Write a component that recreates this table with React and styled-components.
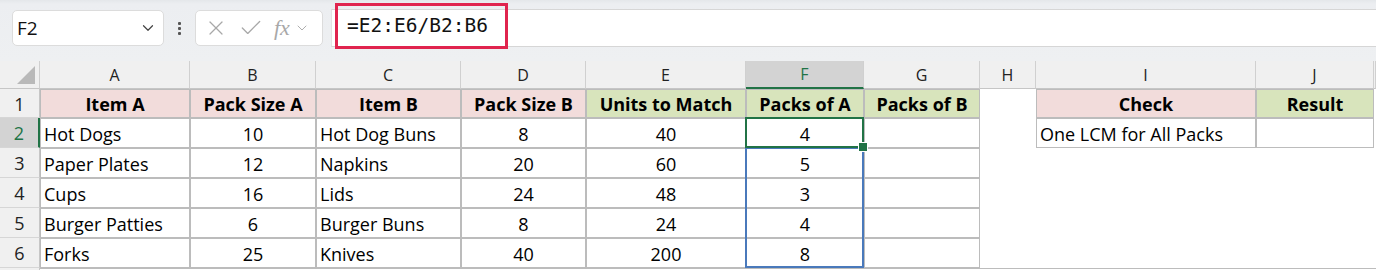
import React from 'react'
import styled, { createGlobalStyle } from 'styled-components'
import { X, Check, ChevronDown } from 'lucide-react'

const letters = ['A', 'B', 'C', 'D', 'E', 'F', 'G', 'H', 'I', 'J']

const PINK = '#f2dcdb'
const GREEN = '#d8e4bc'

const headRow = [
  { t: 'Item A', fill: PINK },
  { t: 'Pack Size A', fill: PINK },
  { t: 'Item B', fill: PINK },
  { t: 'Pack Size B', fill: PINK },
  { t: 'Units to Match', fill: GREEN },
  { t: 'Packs of A', fill: GREEN },
  { t: 'Packs of B', fill: GREEN },
  null,
  { t: 'Check', fill: PINK },
  { t: 'Result', fill: GREEN },
]

const data = [
  ['Hot Dogs', 10, 'Hot Dog Buns', 8, 40, 4],
  ['Paper Plates', 12, 'Napkins', 20, 60, 5],
  ['Cups', 16, 'Lids', 24, 48, 3],
  ['Burger Patties', 6, 'Burger Buns', 8, 24, 4],
  ['Forks', 25, 'Knives', 40, 200, 8],
]

const App = () => {
  return (
    <>
      <Global />
      <Toolbar>
        <NameBox>
          <span>F2</span>
          <ChevronDown size={18} strokeWidth={1.6} color='#444' />
        </NameBox>
        <Dots>
          <i /><i /><i />
        </Dots>
        <FxBox>
          <X size={24} strokeWidth={1.2} color='#a8a8a8' />
          <Check size={26} strokeWidth={1.2} color='#a8a8a8' />
          <Fx>fx</Fx>
          <ChevronDown size={16} strokeWidth={1.4} color='#a8a8a8' />
        </FxBox>
        <Formula>
          <Highlight>=E2:E6/B2:B6</Highlight>
        </Formula>
      </Toolbar>

      <Stack>
        <Sheet>
          <Corner><Triangle /></Corner>
          {letters.map(l => (
            <ColHead key={l} $active={l === 'F'}>{l}</ColHead>
          ))}
          <ColHead />

          <RowHead>1</RowHead>
          {headRow.map((c, i) =>
            c ? <Cell key={i} $fill={c.fill} $bold $center>{c.t}</Cell> : <Blank key={i} />
          )}
          <Blank />

          {data.map((r, ri) => (
            <React.Fragment key={ri}>
              <RowHead $active={ri === 0}>{ri + 2}</RowHead>
              <Cell>{r[0]}</Cell>
              <Cell $center>{r[1]}</Cell>
              <Cell>{r[2]}</Cell>
              <Cell $center>{r[3]}</Cell>
              <Cell $center>{r[4]}</Cell>
              <Cell $center>{r[5]}</Cell>
              <Cell />
              <Blank />
              {ri === 0 ? <Cell>One LCM for All Packs</Cell> : <Blank />}
              {ri === 0 ? <Cell /> : <Blank />}
              <Blank />
            </React.Fragment>
          ))}

          <RowHead />
          <NextRow />
        </Sheet>

        <Overlay>
          <Range />
          <Active><Handle /></Active>
        </Overlay>
      </Stack>
    </>
  )
}
export default App


const Global = createGlobalStyle`
  html, body {
    margin: 0;
    padding: 0;
    background: #ffffff;
    overflow: hidden;
  }
  body {
    font-family: "Open Sans", "Noto Sans", sans-serif;
    color: #000;
  }
`


// T O O L B A R ------------------------------->

const Toolbar = styled.div`
  display: flex;
  align-items: center;
  height: 61px;
  padding: 0 0 0 12px;
  box-sizing: border-box;
  background: linear-gradient(#e4e7ea 0, #eceef1 4px, #eef0f2 100%);
`

const NameBox = styled.div`
  display: flex;
  align-items: center;
  justify-content: space-between;
  width: 152px;
  height: 36px;
  margin-top: -5px;
  padding: 0 6px 0 4px;
  box-sizing: border-box;
  background: #fff;
  border: 1px solid #dcdcdc;
  border-radius: 5px;
  font-size: 19px;
  color: #111;
`

const Dots = styled.div`
  display: flex;
  flex-direction: column;
  gap: 2px;
  margin: -5px 14px 0 14px;
  i {
    display: block;
    width: 3px;
    height: 3px;
    background: #555;
    border-radius: 1px;
  }
`

const FxBox = styled.div`
  display: flex;
  align-items: center;
  gap: 10px;
  width: 128px;
  height: 36px;
  margin-top: -5px;
  padding: 0 4px 0 8px;
  box-sizing: border-box;
  background: #fff;
  border: 1px solid #dcdcdc;
  border-radius: 5px;
`

const Fx = styled.span`
  font-family: "Liberation Serif", "DejaVu Serif", serif;
  font-style: italic;
  font-size: 22px;
  color: #a8a8a8;
  margin-right: -6px;
`

const Formula = styled.div`
  flex: 1;
  display: flex;
  align-items: center;
  height: 36px;
  margin: -5px 0 0 8px;
  padding-left: 3px;
  background: #fff;
  border-top: 1px solid #d6d6d6;
  border-bottom: 1px solid #d6d6d6;
  border-left: 1px solid #e2e2e2;
`

const Highlight = styled.span`
  display: flex;
  align-items: center;
  box-sizing: border-box;
  width: 173px;
  height: 46px;
  margin-top: -4px;
  padding: 0 0 2px 9px;
  border: 3px solid #e0244e;
  font-family: "DejaVu Sans Mono", "Liberation Mono", monospace;
  font-size: 19.5px;
  color: #111;
`


// S H E E T ------------------------------->

const Stack = styled.div`
  display: grid;
  > * {
    grid-area: 1 / 1;
  }
`

const columns = `
  grid-template-columns: 40px 150px 126px 145px 125px 160px 118px 116px 56px 220px 118px 1fr;
  grid-template-rows: 28px 29px repeat(5, 30px) 4px;
`

const Sheet = styled.div`
  display: grid;
  ${columns}
  background: #fff;
`

const Overlay = styled.div`
  display: grid;
  ${columns}
  pointer-events: none;
`

const Corner = styled.div`
  background: #f0f0f0;
  border-right: 1px solid #cfcfcf;
  border-bottom: 1px solid #c6c6c6;
  display: flex;
  align-items: flex-end;
  justify-content: flex-end;
  padding: 0 4px 4px 0;
`

const Triangle = styled.div`
  width: 0;
  height: 0;
  border-left: 18px solid transparent;
  border-bottom: 18px solid #b9b9b9;
`

const ColHead = styled.div`
  display: flex;
  align-items: center;
  justify-content: center;
  font-size: 16px;
  background: ${p => (p.$active ? '#d3d3d3' : '#f0f0f0')};
  color: ${p => (p.$active ? '#217346' : '#222')};
  border-right: 1px solid #d0d0d0;
  border-bottom: ${p => (p.$active ? '2px solid #217346' : '1px solid #c6c6c6')};
`

const RowHead = styled.div`
  display: flex;
  align-items: center;
  justify-content: center;
  padding-top: 1px;
  font-size: 18px;
  background: ${p => (p.$active ? '#d3d3d3' : '#f0f0f0')};
  color: ${p => (p.$active ? '#217346' : '#222')};
  border-right: ${p => (p.$active ? '2px solid #217346' : '1px solid #c6c6c6')};
  border-bottom: 1px solid #d6d6d6;
`

const Cell = styled.div`
  display: flex;
  align-items: center;
  justify-content: ${p => (p.$center ? 'center' : 'flex-start')};
  padding: 1px 3px 0 3px;
  font-size: 18px;
  font-weight: ${p => (p.$bold ? 700 : 400)};
  white-space: nowrap;
  overflow: hidden;
  background: ${p => p.$fill || '#fff'};
  border: 1px solid #bcbcbc;
`

const Blank = styled.div`
  background: #fff;
`

const NextRow = styled.div`
  grid-column: 2 / -1;
  border-top: 1px solid #bcbcbc;
`

const Range = styled.div`
  grid-column: 7;
  grid-row: 4 / 8;
  margin: -1px 0 0 -1px;
  border: 2px solid #4a79bb;
`

const Active = styled.div`
  grid-column: 7;
  grid-row: 3;
  margin: -1px 0 0 -1px;
  border: 2px solid #217346;
  position: relative;
  z-index: 1;
`

const Handle = styled.div`
  position: absolute;
  right: -6px;
  bottom: -6px;
  width: 8px;
  height: 8px;
  background: #217346;
  border: 1px solid #fff;
`
